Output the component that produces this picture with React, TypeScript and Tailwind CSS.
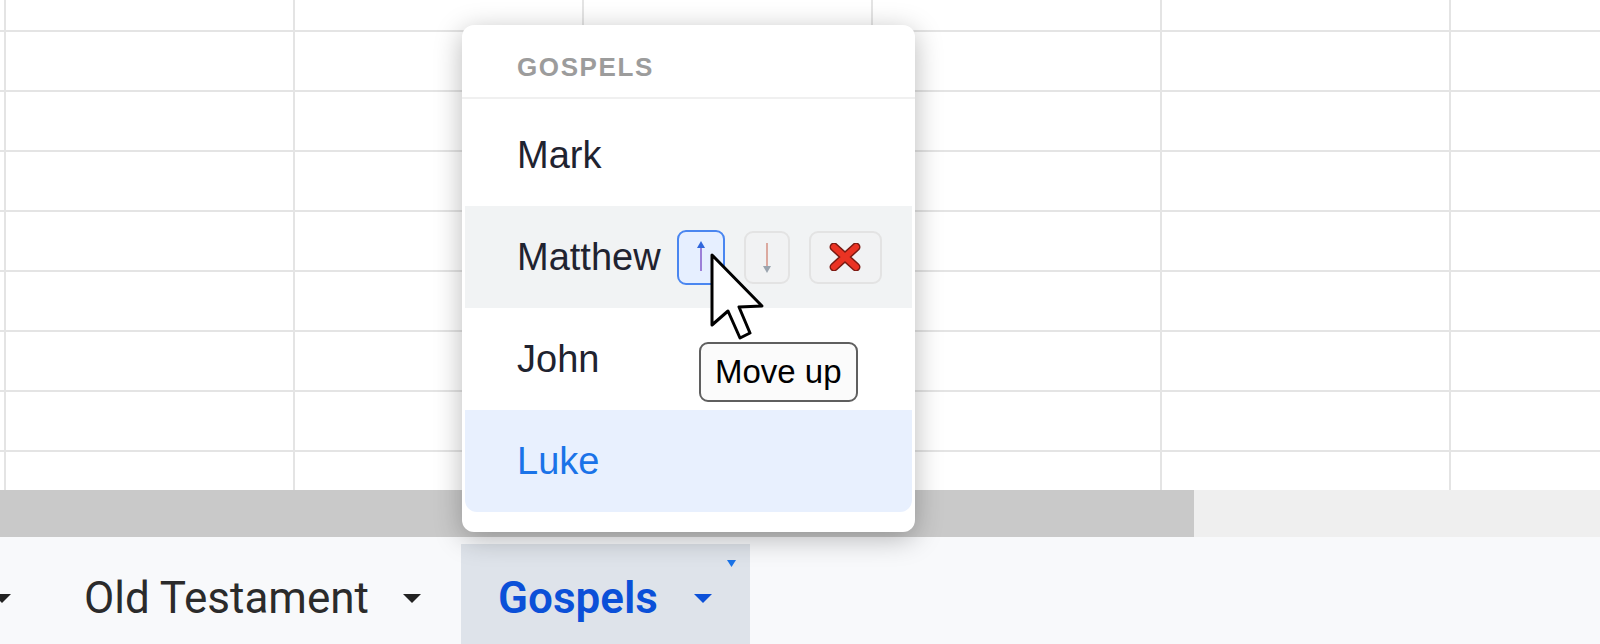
const rowHeights = [32, 60, 60, 60, 60, 60, 60, 60, 38];
const colCount = 6;

const items = ["Mark", "Matthew", "John", "Luke"];

function Caret({ className }: { className: string }) {
  return (
    <svg width="18" height="9" viewBox="0 0 18 9" className={className}>
      <path d="M0 0 L18 0 L9 9 Z" />
    </svg>
  );
}

function SheetGrid() {
  return (
    <div className="h-[490px] overflow-hidden">
      {rowHeights.map((h, r) => (
        <div
          key={r}
          className={`flex ${r < rowHeights.length - 1 ? "border-b-2 border-[#e4e4e4]" : ""}`}
          style={{ height: h }}
        >
          <div className="w-[6px] shrink-0 border-r-2 border-[#e4e4e4]" />
          {Array.from({ length: colCount }, (_, c) => (
            <div key={c} className="w-[289px] shrink-0 border-r-2 border-[#e4e4e4]" />
          ))}
        </div>
      ))}
    </div>
  );
}

function UpArrow() {
  return (
    <svg width="14" height="32" viewBox="0 0 14 32">
      <line x1="7" y1="4" x2="7" y2="30" stroke="#9c7fd8" strokeWidth="2" />
      <path d="M7 0 L11 7 L3 7 Z" fill="#2f66dc" />
    </svg>
  );
}

function DownArrow() {
  return (
    <svg width="14" height="32" viewBox="0 0 14 32">
      <line x1="7" y1="2" x2="7" y2="27" stroke="#dba99f" strokeWidth="2" />
      <path d="M7 32 L11 25 L3 25 Z" fill="#9aa4ae" />
    </svg>
  );
}

function RedCross() {
  return (
    <svg width="32" height="28" viewBox="0 0 32 28">
      <g strokeLinecap="round">
        <path d="M5 4 L27 24 M27 4 L5 24" stroke="#7a1a12" strokeWidth="9" />
        <path d="M5 4 L27 24 M27 4 L5 24" stroke="#ea3323" strokeWidth="6" />
      </g>
    </svg>
  );
}

function Cursor() {
  return (
    <svg width="58" height="92" viewBox="-3 -3 58 92" className="absolute left-[709px] top-[252px]">
      <path
        d="M0 0 L0 70 L16 56 L28 83 L38 78 L27 52 L50 51 Z"
        fill="white"
        stroke="black"
        strokeWidth="3"
        strokeLinejoin="round"
      />
    </svg>
  );
}

function GospelsMenu() {
  return (
    <div className="absolute left-[462px] top-[25px] w-[453px] h-[507px] bg-white rounded-[12px] shadow-[0_6px_28px_rgba(0,0,0,0.28)] overflow-hidden font-['Liberation_Sans',Arial,sans-serif]">
      <div className="h-[74px] flex items-center pt-[12px] pl-[55px] border-b-2 border-[#f0f0f0]">
        <span className="text-[26px] font-semibold tracking-[1.6px] text-[#9c9c9c]">GOSPELS</span>
      </div>
      <div className="px-[3px]">
        {items.map((name, i) => {
          const hovered = name === "Matthew";
          const selected = name === "Luke";
          return (
            <div
              key={name}
              className={`flex items-center pl-[52px] ${i === 0 ? "h-[107px] pt-[5px]" : "h-[102px]"} ${
                hovered ? "bg-[#f1f3f4]" : ""
              } ${selected ? "bg-[#e8f0fe] rounded-b-[12px]" : ""}`}
            >
              <span className={`text-[38px] ${selected ? "text-[#1a73e8]" : "text-[#1f2330]"}`}>{name}</span>
              {hovered && (
                <div className="flex items-center ml-[16px] gap-[19px]">
                  <div className="w-[48px] h-[55px] flex items-center justify-center rounded-[9px] border-2 border-[#4a86f0] bg-[#e6efff]">
                    <UpArrow />
                  </div>
                  <div className="w-[46px] h-[53px] flex items-center justify-center rounded-[9px] border-2 border-[#e3e3e3] bg-[#f1f2f3]">
                    <DownArrow />
                  </div>
                  <div className="w-[73px] h-[53px] flex items-center justify-center rounded-[9px] border-2 border-[#e3e3e3] bg-[#f1f2f3]">
                    <RedCross />
                  </div>
                </div>
              )}
            </div>
          );
        })}
      </div>
    </div>
  );
}

function SheetTabs() {
  return (
    <div className="h-[107px] bg-[#f8f9fb] pt-[7px] flex font-['Roboto',Arial,sans-serif]">
      <div className="w-[461px] flex items-center pt-[8px]">
        <Caret className="-ml-[7px] fill-[#222]" />
        <span className="ml-[73px] text-[44px] text-[#2b2b2b] leading-none">Old Testament</span>
        <Caret className="ml-[34px] fill-[#222]" />
      </div>
      <div className="relative w-[289px] bg-[#dee3ea] flex items-center pl-[37px] pt-[8px]">
        <span className="text-[44px] font-semibold text-[#0b50d8] leading-none">Gospels</span>
        <Caret className="ml-[36px] fill-[#0b50d8]" />
        <svg width="9" height="7" viewBox="0 0 9 7" className="absolute right-[14px] top-[16px]">
          <path d="M0 0 L9 0 L4.5 7 Z" fill="#1a73e8" />
        </svg>
      </div>
    </div>
  );
}

export default function App() {
  return (
    <div className="relative w-[1600px] h-[644px] overflow-hidden bg-white">
      <SheetGrid />
      <div className="h-[47px] flex">
        <div className="w-[1194px] bg-[#c9c9c9]" />
        <div className="flex-1 bg-[#efefef]" />
      </div>
      <SheetTabs />
      <GospelsMenu />
      <Cursor />
      <div className="absolute left-[699px] top-[342px] h-[60px] px-[14px] flex items-center rounded-[9px] border-2 border-[#5f5f5f] bg-[#fbfbfb] font-['Liberation_Sans',Arial,sans-serif] text-[33px] text-black">
        Move up
      </div>
    </div>
  );
}
